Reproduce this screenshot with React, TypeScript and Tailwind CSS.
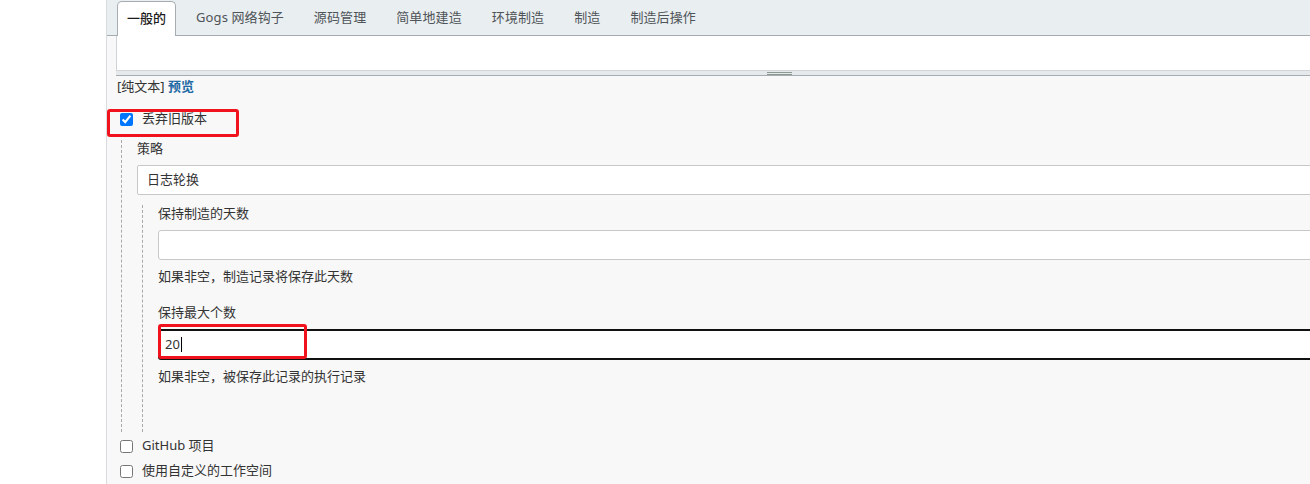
const font = {
  fontFamily: '"Noto Sans", "Noto Sans CJK SC", sans-serif',
};

const tabs = ['一般的', 'Gogs 网络钩子', '源码管理', '简单地建造', '环境制造', '制造', '制造后操作'];

function Tabs() {
  return (
    <div className="flex h-[36px] items-end gap-[10px] border-b border-[#a6adb2] bg-[#e9eef1] pl-[10px]">
      {tabs.map((t, i) =>
        i === 0 ? (
          <div
            key={t}
            className="mb-[-1px] flex h-[35px] items-center rounded-t-[5px] border border-b-0 border-[#a6adb2] bg-white px-[9px] font-medium text-[#1b1b1b]"
          >
            {t}
          </div>
        ) : (
          <div key={t} className="flex h-[34px] items-center px-[10px] text-[#4f5458] tracking-[0.1px]">
            {t}
          </div>
        )
      )}
    </div>
  );
}

function CheckRow({ label, checked, className }: { label: string; checked?: boolean; className?: string }) {
  return (
    <div className={`flex h-[20px] items-center gap-[9px] pl-[13px] ${className ?? ''}`}>
      <input type="checkbox" defaultChecked={checked} className="h-[13px] w-[13px]" />
      <span>{label}</span>
    </div>
  );
}

function Field({ label, help, value, focused, className }: { label: string; help: string; value?: string; focused?: boolean; className?: string }) {
  return (
    <div className={className}>
      <div className="h-[17px] leading-[17px]">{label}</div>
      {focused ? (
        <div className="mr-[-20px] mt-[8px] flex h-[31px] items-center rounded-[3px] border-2 border-[#111] bg-white pl-[5px]">
          <span>{value}</span>
          <span className="ml-[1px] h-[15px] w-[1px] bg-black" />
        </div>
      ) : (
        <div className="mr-[-20px] mt-[8px] h-[30px] rounded-[3px] border border-[#c8c8c8] bg-white" />
      )}
      <div className="mt-[8px] h-[17px] leading-[17px]">{help}</div>
    </div>
  );
}

export default function App() {
  return (
    <div className="flex h-[484px] w-full overflow-hidden bg-white text-[13px] text-[#333]" style={font}>
      <div className="w-[106px] shrink-0" />
      <div className="relative min-w-0 flex-1 overflow-hidden border-l border-[#d8dcdf] bg-[#f8f8f8]">
        <Tabs />

        {/* description editor */}
        <div className="ml-[9px]">
          <div className="h-[34px] border-l border-[#cfd3d6] bg-white" />
          <div className="h-[6px] border-y border-t-[#d2d6d9] border-b-[#a6adb2] bg-[#e5e9ec]">
            <div className="ml-[651px] mt-[1px] h-[3px] w-[25px] border-y border-[#8e9893]" />
          </div>
        </div>

        <div className="h-[20px] pl-[10px] leading-[20px]">
          [纯文本] <span className="font-bold text-[#1f6aa5]">预览</span>
        </div>

        <CheckRow label="丢弃旧版本" checked className="mt-[13px]" />

        <div className="ml-[14px] mt-[11px] border-l border-dashed border-[#a9a9a9] pl-[15px]">
          <div className="h-[17px] leading-[17px]">策略</div>
          <div className="mr-[-20px] mt-[8px] flex h-[30px] items-center rounded-[2px] border border-[#c8c8c8] bg-white pl-[9px]">
            日志轮换
          </div>

          <div className="ml-[5px] mt-[10px] border-l border-dashed border-[#a9a9a9] pb-[47px] pl-[15px]">
            <Field label="保持制造的天数" help="如果非空，制造记录将保存此天数" />
            <Field label="保持最大个数" help="如果非空，被保存此记录的执行记录" value="20" focused className="mt-[19px]" />
          </div>
        </div>

        <CheckRow label="GitHub 项目" className="mt-[4px]" />
        <CheckRow label="使用自定义的工作空间" className="mt-[5px]" />

        {/* annotation boxes */}
        <div className="pointer-events-none absolute left-0 top-[109px] h-[28px] w-[132px] rounded-[3px] border-[3px] border-[#f0131d]" />
        <div className="pointer-events-none absolute left-[51px] top-[324px] h-[35px] w-[149px] rounded-[3px] border-[3px] border-[#f0131d]" />
      </div>
    </div>
  );
}
